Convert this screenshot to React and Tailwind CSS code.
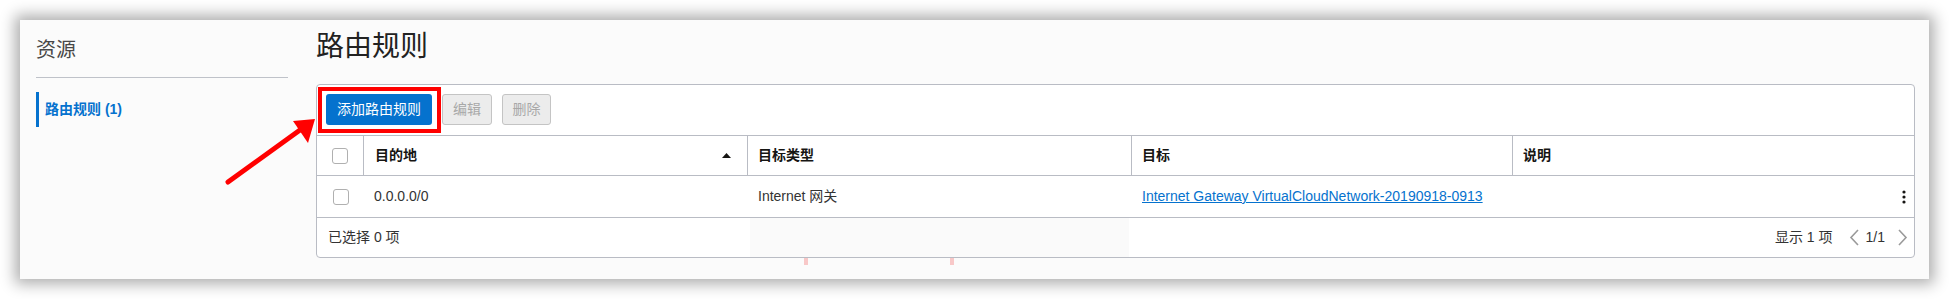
export default function App() {
  const font = { fontFamily: '"Liberation Sans", Arial, "Noto Sans CJK SC", sans-serif' };
  return (
    <div className="w-[1949px] h-[299px] bg-white p-[20px] relative" style={font}>
      <div className="w-[1909px] h-[259px] bg-[#fbfbfb] shadow-[0_0_14px_5px_rgba(0,0,0,0.32)] flex pl-[16px] pr-[14px]">
        {/* Sidebar */}
        <div className="w-[252px] pt-[16px]">
          <div className="text-[20px] leading-[28px] text-[#484848]">资源</div>
          <div className="h-px bg-[#bfc2c9] mt-[13px]"></div>
          <div className="mt-[14px] h-[35px] border-l-[3px] border-[#0572ce] pl-[6px] flex items-center text-[14px] font-bold text-[#0572ce]">
            路由规则 (1)
          </div>
        </div>
        {/* Main */}
        <div className="ml-[28px] flex-1 pt-[9px]">
          <div className="text-[28px] leading-[36px] text-[#222]">路由规则</div>
          <div className="mt-[19px] border border-[#b9bcc4] rounded-[4px] bg-white text-[14px] text-[#333]">
            {/* Toolbar */}
            <div className="h-[50px] flex items-start pt-[9px] pl-[9px] gap-[10px]">
              <div className="relative">
                <button className="h-[31px] px-[11px] rounded-[3px] bg-[#0572ce] text-white text-[14px] leading-[31px]">添加路由规则</button>
                <div className="absolute left-[-8px] top-[-7px] w-[123px] h-[46px] border-[4px] border-[#ff0000]"></div>
              </div>
              <button className="h-[31px] w-[50px] rounded-[3px] bg-[#ececec] border border-[#c4c4c4] text-[#a8a8a8] text-[14px]">编辑</button>
              <button className="h-[31px] w-[49px] rounded-[3px] bg-[#ececec] border border-[#c4c4c4] text-[#a8a8a8] text-[14px]">删除</button>
            </div>
            {/* Header */}
            <div className="flex h-[40px] border-t border-[#b9bcc4] font-bold text-[#161513]">
              <div className="w-[47px] flex items-center justify-center border-r border-[#b9bcc4]">
                <span className="w-[16px] h-[16px] rounded-[3px] border border-[#b0b0b0] bg-white"></span>
              </div>
              <div className="w-[384px] flex items-center justify-between pl-[11px] pr-[16px] border-r border-[#b9bcc4]">
                <span>目的地</span>
                <svg width="9" height="5" viewBox="0 0 9 5"><path d="M0 5 L4.5 0 L9 5 Z" fill="#161513" /></svg>
              </div>
              <div className="w-[384px] flex items-center pl-[10px] border-r border-[#b9bcc4]">目标类型</div>
              <div className="w-[381px] flex items-center pl-[10px] border-r border-[#b9bcc4]">目标</div>
              <div className="flex-1 flex items-center pl-[10px]">说明</div>
            </div>
            {/* Data row */}
            <div className="flex h-[42px] border-t border-[#b9bcc4] items-center">
              <div className="w-[47px] flex items-center justify-center">
                <span className="w-[16px] h-[16px] rounded-[3px] border border-[#b0b0b0] bg-white"></span>
              </div>
              <div className="w-[384px] pl-[10px]">0.0.0.0/0</div>
              <div className="w-[384px] pl-[10px]">Internet 网关</div>
              <div className="w-[381px] pl-[10px]">
                <span className="text-[#0572ce] underline">Internet Gateway VirtualCloudNetwork-20190918-0913</span>
              </div>
              <div className="flex-1 flex justify-end pr-[8px]">
                <svg width="4" height="14" viewBox="0 0 4 14">
                  <circle cx="2" cy="2" r="1.6" fill="#161513" />
                  <circle cx="2" cy="7" r="1.6" fill="#161513" />
                  <circle cx="2" cy="12" r="1.6" fill="#161513" />
                </svg>
              </div>
            </div>
            {/* Footer */}
            <div className="flex h-[40px] border-t border-[#b9bcc4] items-center relative">
              <div className="absolute left-[433px] top-0 w-[379px] h-[39px] bg-[#fafafa]"></div>
              <span className="pl-[11px] relative">已选择 0 项</span>
              <div className="ml-auto flex items-center pr-[6px] relative">
                <span>显示 1 项</span>
                <svg className="ml-[16px]" width="11" height="17" viewBox="0 0 11 17"><path d="M9 1 L2 8.5 L9 16" fill="none" stroke="#9a9a9a" strokeWidth="1.6" /></svg>
                <span className="ml-[6px]">1/1</span>
                <svg className="ml-[12px]" width="11" height="17" viewBox="0 0 11 17"><path d="M2 1 L9 8.5 L2 16" fill="none" stroke="#9a9a9a" strokeWidth="1.6" /></svg>
              </div>
            </div>
          </div>
          <div className="flex h-[7px]">
            <span className="ml-[488px] w-[4px] h-[7px] bg-[#f8c8c8]"></span>
            <span className="ml-[142px] w-[4px] h-[7px] bg-[#f8c8c8]"></span>
          </div>
        </div>
      </div>
      {/* Arrow overlay */}
      <svg className="absolute left-0 top-0" width="1949" height="299" viewBox="0 0 1949 299">
        <line x1="228" y1="182" x2="300" y2="130" stroke="#ff0000" strokeWidth="5" strokeLinecap="round" />
        <polygon points="315,119 293,121 308,143" fill="#ff0000" />
      </svg>
    </div>
  );
}
